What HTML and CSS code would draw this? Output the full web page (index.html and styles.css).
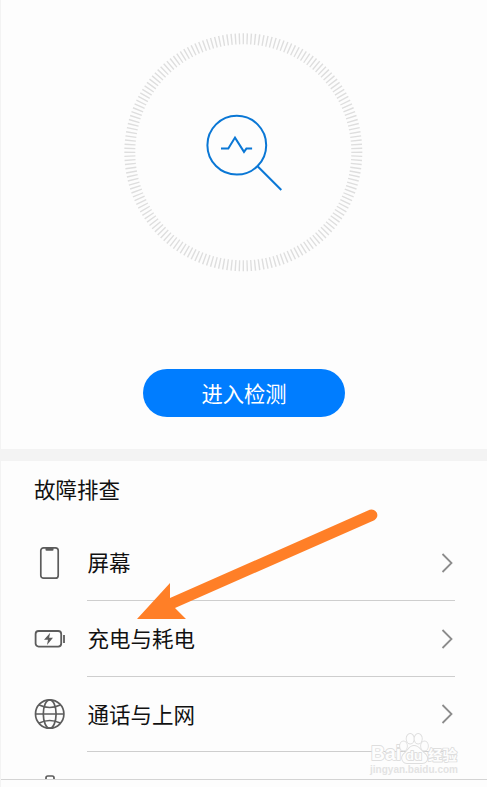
FILE: index.html
```html
<!DOCTYPE html>
<html lang="zh-CN">
<head>
    <meta charset="utf-8">
    <title>故障排查</title>
    <link rel="stylesheet" href="styles.css">
</head>
<body>
<div class="screen">
    <div class="check">
        <svg class="dial" width="240" height="240" viewBox="0 0 240 240" fill="none">
            <circle cx="120.3" cy="120.3" r="113.5" stroke="#dedede" stroke-width="11" pathLength="360" stroke-dasharray="0.7 1.3" stroke-dashoffset="0.35"/>
            <g stroke="#0a77d5" stroke-width="2">
                <circle cx="113.8" cy="113.2" r="29.4"/>
                <path d="M134.8 134.5L158.3 158"/>
                <path d="M98 116.6h7.3l6.7-11 9 14.3 2.4-3.3h5.7"/>
            </g>
        </svg>
        <button class="check-button">进入检测</button>
    </div>
    <div class="faults">
        <h2 class="title">故障排查</h2>
        <div class="row">
            <svg class="icon" width="32" height="36" viewBox="0 0 32 36" fill="none">
                <rect x="7.8" y="2.8" width="17.4" height="30.4" rx="2.8" stroke="#5c5c5c" stroke-width="1.7"/>
                <path d="M12.5 2.5h8v2.2q0 1-1 1h-6q-1 0-1-1z" fill="#5c5c5c"/>
            </svg>
            <div class="label">屏幕</div>
            <svg class="arrow" width="12" height="20" viewBox="0 0 12 20"><path d="M1.5 1l9 9-9 9"/></svg>
        </div>
        <div class="row">
            <svg class="icon" width="32" height="36" viewBox="0 0 32 36" fill="none">
                <rect x="2.6" y="10" width="25.6" height="15.6" rx="3" stroke="#5c5c5c" stroke-width="1.8"/>
                <path d="M31 14v8" stroke="#5c5c5c" stroke-width="1.8"/>
                <path d="M17.2 11.8l-6.2 7h4l-1 5.2 6-7.2h-3.9z" fill="#5c5c5c"/>
            </svg>
            <div class="label">充电与耗电</div>
            <svg class="arrow" width="12" height="20" viewBox="0 0 12 20"><path d="M1.5 1l9 9-9 9"/></svg>
        </div>
        <div class="row">
            <svg class="icon" width="32" height="36" viewBox="0 0 32 36" fill="none" stroke="#5c5c5c" stroke-width="1.7">
                <circle cx="16.7" cy="18" r="14.2"/>
                <ellipse cx="16.7" cy="18" rx="6.4" ry="14.2"/>
                <path d="M2.5 18h28.4M6.2 9q10.5 5 21 0M6.2 27q10.5-5 21 0"/>
            </svg>
            <div class="label">通话与上网</div>
            <svg class="arrow" width="12" height="20" viewBox="0 0 12 20"><path d="M1.5 1l9 9-9 9"/></svg>
        </div>
        <div class="next">
            <svg width="12" height="4" viewBox="0 0 12 4" fill="none"><path d="M2 4V2.8Q2 1 3.8 1h4.4Q10 1 10 2.8V4" stroke="#5c5c5c" stroke-width="1.7"/></svg>
        </div>
    </div>
    <!-- pointer to the battery row -->
    <svg class="pointer" width="246" height="114" viewBox="0 0 246 114">
        <path d="M4 113L37 77v15L236.7 3.8a5.7 5.7 0 0 1 4.6 10.4L42 102l11 11z" fill="#ff7f27"/>
    </svg>
    <svg class="watermark" width="96" height="48" viewBox="0 0 96 48">
        <g class="mark">
            <text class="brand" x="3" y="30" textLength="30" lengthAdjust="spacingAndGlyphs">Bai</text>
            <ellipse cx="35.5" cy="16" rx="3.4" ry="4.5"/>
            <ellipse cx="42.2" cy="8.8" rx="3.6" ry="4.8"/>
            <ellipse cx="50.2" cy="8.8" rx="3.6" ry="4.8"/>
            <ellipse cx="56.5" cy="16" rx="3.4" ry="4.5"/>
            <path d="M46 16c-5 0-6 5-10 8-4 4-1 9 3 9h15c5 0 7-5 3-9-4-3-6-8-11-8z"/>
            <text class="du" x="38" y="30">du</text>
            <text class="cn" x="60" y="30" textLength="29" lengthAdjust="spacingAndGlyphs">经验</text>
            <text class="url" x="2" y="43" textLength="88" lengthAdjust="spacingAndGlyphs">jingyan.baidu.com</text>
        </g>
    </svg>
</div>
</body>
</html>
```

FILE: styles.css
```css
body {
  margin: 0;
  background-color: #fdfdfd;
  font-family: "Noto Sans CJK SC", sans-serif;
  color: #111;
}

.screen {
  position: relative;
  box-sizing: border-box;
  height: 787px;
  overflow: hidden;
  border-left: 1px solid #f3f3f3;
}

.check {
  display: flex;
  flex-direction: column;
  align-items: center;
  box-sizing: border-box;
  height: 461px;
  padding-top: 32px;
  border-bottom: 12px solid #f3f3f3;
}

.dial {
  margin-right: 2px;
}

.check-button {
  width: 202px;
  height: 48px;
  margin-top: 97px;
  padding: 0;
  border: 0;
  border-radius: 24px;
  background-color: #007dff;
  color: white;
  font-family: inherit;
  font-size: 21.3px;
  line-height: 46px;
}

.faults {
  box-sizing: border-box;
  height: 319px;
  padding-left: 32px;
  border-bottom: 1px solid #d4d4d4;
}

.title {
  margin: 0;
  height: 64px;
  padding-left: 1px;
  font-size: 21.5px;
  font-weight: normal;
  line-height: 56px;
}

.row {
  display: flex;
  align-items: center;
  height: 75.8px;
}

.label {
  flex: 1;
  box-sizing: border-box;
  height: 75.8px;
  margin-left: 22px;
  padding-left: 0.5px;
  border-bottom: 1px solid #cecece;
  font-size: 21.5px;
  line-height: 74px;
}

.arrow {
  flex: none;
  margin-left: -14px;
  margin-right: 34px;
  fill: none;
  stroke: #8c8c8c;
  stroke-width: 1.8;
}

.next {
  display: flex;
  align-items: flex-end;
  height: 26.6px;
  padding-left: 11px;
}

.pointer {
  position: absolute;
  left: 132px;
  top: 506px;
}

.watermark {
  position: absolute;
  left: 367px;
  top: 730px;
}

.mark {
  fill: #fdfdfd;
  stroke: #dedede;
  stroke-width: 1.8;
  stroke-linejoin: round;
  paint-order: stroke;
  font-family: "Liberation Sans", "Noto Sans CJK SC", sans-serif;
  font-weight: bold;
}

.brand {
  font-size: 20px;
}

.du {
  font-size: 13px;
}

.cn {
  font-size: 14px;
}

.url {
  font-size: 10px;
  fill: #e3e3e3;
  stroke: none;
}
```
